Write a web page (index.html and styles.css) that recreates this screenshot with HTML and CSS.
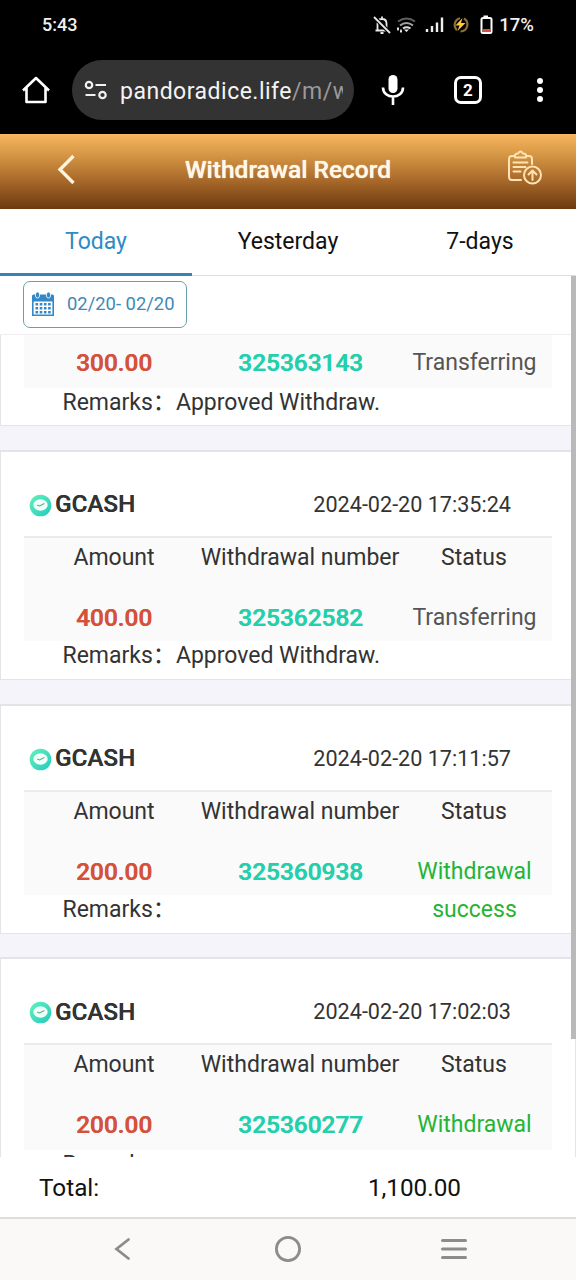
FILE: index.html
```html
<!DOCTYPE html>
<html lang="en">
<head>
<meta charset="utf-8">
<title>Withdrawal Record</title>
<link rel="stylesheet" href="styles.css">
</head>
<body>
<div class="status-bar">
  <span class="clock">5:43</span>
  <div class="indicators">
    <svg class="ind-icons" width="126" height="24" viewBox="0 0 126 24" fill="none">
      <path d="M4.500 17V10.500q0-4.500 4.500-4.500t4.500 4.500V17M2.500 17.500h13M7.500 20h3M9 5.500v-2" stroke="#e8e8e8" stroke-width="1.800"/>
      <path d="M1 4l16 16" stroke="#000" stroke-width="4"/>
      <path d="M1 4l16 16" stroke="#e8e8e8" stroke-width="1.800"/>
      <path d="M25 8.500q8.500-6 17 0" stroke="#5f5f5f" stroke-width="2"/>
      <path d="M27 12.500q6.500-5 13 0" stroke="#a5a5a5" stroke-width="2"/>
      <path d="M30 15.500q3.500-2.500 7.500 0" stroke="#ddd" stroke-width="2"/>
      <path d="M33.500 19l-2.500-2.500h5z" fill="#eee"/>
      <path d="M25 14.500v3M28 16.500v3M24 15.500h2M27 18.500h2" stroke="#eee" stroke-width="1.600"/>
      <path d="M54 19v-3M59 19v-6M64 19V9.500M69 19V4.500" stroke="#eee" stroke-width="2.400"/>
      <path d="M87 5.200a7 7 0 0 0-3 12M91 5.500a7 7 0 0 1-3.500 13" stroke="#8d7035" stroke-width="2.200"/>
      <path d="M89.500 5l-7 7.500h4L84.500 18l8-8h-4.500z" fill="#ffc83a"/>
      <path d="M110.500 2.500h4.500v2.500h-4.500z" fill="#fff"/>
      <rect x="108.500" y="5" width="10" height="15" rx="1.500" stroke="#fff" stroke-width="2"/>
      <path d="M109.500 16h8v3h-8z" fill="#d9503f"/>
    </svg>
    <span class="battery">17%</span>
  </div>
</div>

<div class="browser-bar">
  <svg class="home" width="28" height="28" viewBox="0 0 28 28" fill="none" stroke="#fff" stroke-width="2.600" stroke-linejoin="round"><path d="M1 14.500L14 2l13 12.500M4.500 12v14h19V12"/></svg>
  <div class="omnibox">
    <svg width="24" height="20" viewBox="0 0 24 20" fill="none" stroke="#f1f1f1" stroke-width="2.200"><circle cx="5" cy="5" r="3.200"/><path d="M11.500 5h10.500M1.500 15h10"/><circle cx="18.500" cy="15" r="3.200"/></svg>
    <span class="url">pandoradice.life<span class="path">/m/w</span></span>
  </div>
  <svg class="mic" width="24" height="32" viewBox="0 0 24 32" fill="none" stroke="#fff"><rect x="7.500" y="1" width="9" height="18" rx="4.500" fill="#fff" stroke="none"/><path d="M2 13.500c0 12 20 12 20 0M12 22.500V31" stroke-width="2.600"/></svg>
  <div class="tab-count">2</div>
  <div class="dots"><i></i><i></i><i></i></div>
</div>

<header class="page-head">
  <svg class="back" width="20" height="32" viewBox="0 0 20 32" fill="none" stroke="#fff3dc" stroke-width="3.400"><path d="M17.500 3L4 16.500 17.500 30"/></svg>
  <h1>Withdrawal Record</h1>
  <svg class="report" width="36" height="36" viewBox="0 0 36 36" fill="none" stroke="#ffe3b5" stroke-width="2" stroke-linecap="round" stroke-linejoin="round">
    <path d="M8 6H5Q2 6 2 9v18q0 3 3 3h9M19 6h3q3 0 3 3v5M8 7.500V5.500q0-2 3-2 2.500-4 5 0 3 0 3 2v2z"/>
    <path d="M6.500 12.500h14M6.500 17h12M6.500 21.500h7"/>
    <circle cx="25.500" cy="25" r="8.500"/><path d="M25.500 30v-9M21.500 24.500l4-4 4 4"/>
  </svg>
</header>

<nav class="tabs">
  <div class="tab active">Today</div>
  <div class="tab">Yesterday</div>
  <div class="tab">7-days</div>
</nav>

<main class="content">
  <div class="filter">
    <div class="range">
      <svg width="22" height="24" viewBox="0 0 22 24" fill="#3488c8">
        <path d="M0 4q0-1.500 1.500-1.500H20.500Q22 2.500 22 4V24H0zM1.600 9.500v12.900h18.800V9.500z" fill-rule="evenodd"/>
        <rect x="3.500" y="0" width="4" height="6" rx="2" stroke="#fff" stroke-width=".8"/><rect x="14.500" y="0" width="4" height="6" rx="2" stroke="#fff" stroke-width=".8"/>
        <path d="M3.500 12.200h15.500M3.500 16.200h15.500M3.500 20.200h15.500" stroke="#3488c8" stroke-width="2.400" stroke-dasharray="2.600 1.600"/>
      </svg>
      <span>02/20- 02/20</span>
    </div>
  </div>
  <div class="viewport">
    <div class="records">
      <section class="card partial">
        <div class="grid">
          <span class="amount">300.00</span><span class="number">325363143</span><span class="status">Transferring</span>
        </div>
        <p class="remarks">Remarks：<span>Approved Withdraw.</span></p>
      </section>
      <section class="card">
        <div class="card-head"><svg class="coin" viewBox="0 0 24 24"><use href="#coin"/></svg><b>GCASH</b><time>2024-02-20 17:35:24</time></div>
        <div class="grid">
          <span>Amount</span><span class="label-number">Withdrawal number</span><span>Status</span>
          <span class="amount">400.00</span><span class="number">325362582</span><span class="status">Transferring</span>
        </div>
        <p class="remarks">Remarks：<span>Approved Withdraw.</span></p>
      </section>
      <section class="card">
        <div class="card-head"><svg class="coin" viewBox="0 0 24 24"><use href="#coin"/></svg><b>GCASH</b><time>2024-02-20 17:11:57</time></div>
        <div class="grid">
          <span>Amount</span><span class="label-number">Withdrawal number</span><span>Status</span>
          <span class="amount">200.00</span><span class="number">325360938</span><span class="status success">Withdrawal success</span>
        </div>
        <p class="remarks">Remarks：</p>
      </section>
      <section class="card">
        <div class="card-head"><svg class="coin" viewBox="0 0 24 24"><use href="#coin"/></svg><b>GCASH</b><time>2024-02-20 17:02:03</time></div>
        <div class="grid last">
          <span>Amount</span><span class="label-number">Withdrawal number</span><span>Status</span>
          <span class="amount">200.00</span><span class="number">325360277</span><span class="status success">Withdrawal</span>
        </div>
        <p class="remarks">Remarks：</p>
      </section>
    </div>
  </div>
  <i class="scroll-thumb"></i>
</main>

<footer class="total"><span>Total:</span><span>1,100.00</span></footer>

<div class="system-nav">
  <svg width="18" height="24" viewBox="0 0 18 24" fill="none" stroke="#8c8c8a" stroke-width="2.800" stroke-linecap="round"><path d="M15.500 2.500L3.500 12l12 9.500"/></svg>
  <svg class="home-key" width="28" height="28" viewBox="0 0 28 28" fill="none" stroke="#8c8c8a" stroke-width="2.800"><circle cx="14" cy="14" r="11.600"/></svg>
  <svg width="28" height="22" viewBox="0 0 28 22" fill="none" stroke="#8c8c8a" stroke-width="3" stroke-linecap="round"><path d="M2.500 2.500h23M2.500 11h23M2.500 19.500h23"/></svg>
</div>

<svg width="0" height="0" class="defs">
  <defs>
    <linearGradient id="mint" x1="0" y1="0" x2="1" y2="1"><stop offset="0" stop-color="#63f3bd"/><stop offset="1" stop-color="#24c9bc"/></linearGradient>
    <symbol id="coin" viewBox="0 0 24 24"><circle cx="12" cy="12" r="11.300" fill="url(#mint)"/><ellipse cx="12" cy="11.500" rx="7.500" ry="6" fill="#effffa"/><path d="M8.500 11.500l2.500 1 5-2.500" fill="none" stroke="#5fa898" stroke-width="1.200"/></symbol>
  </defs>
</svg>
</body>
</html>
```
FILE: styles.css
```css
* { box-sizing: border-box; }
body {
  margin: 0;
  width: 576px;
  height: 1280px;
  overflow: hidden;
  display: flex;
  flex-direction: column;
  background: #fff;
  color: #333;
  font-family: Roboto, "Noto Sans CJK SC", sans-serif;
  font-size: 23px;
}
svg { display: block; flex: none; }
.defs { position: absolute; }

.status-bar {
  height: 48px;
  flex: none;
  background: #000;
  color: #f0f0f0;
  display: flex;
  align-items: center;
  justify-content: space-between;
  padding: 1px 42px 0;
  font-size: 18.500px;
  font-weight: 500;
}
.clock { font-size: 18px; }
.indicators { display: flex; align-items: center; }

.browser-bar {
  height: 86px;
  flex: none;
  background: #000;
  display: flex;
  align-items: center;
  padding: 0 33px 2px 22px;
}
.omnibox {
  width: 282px;
  height: 60px;
  margin-left: 22px;
  padding: 0 10px 0 12px;
  border-radius: 30px;
  background: #333;
  color: #f4f4f4;
  display: flex;
  align-items: center;
  gap: 12px;
  overflow: hidden;
}
.url {
  width: 223px;
  overflow: hidden;
  white-space: nowrap;
  font-size: 23px;
  letter-spacing: .5px;
  padding-top: 2px;
}
.path { color: #9a9a9a; }
.mic { margin-left: 27px; }
.tab-count {
  width: 28px;
  height: 28px;
  margin-left: 49px;
  border: 3px solid #fff;
  border-radius: 7px;
  color: #fff;
  font-size: 17px;
  line-height: 22px;
  font-weight: 700;
  text-align: center;
}
.dots { display: flex; flex-direction: column; gap: 3px; margin-left: auto; }
.dots i { width: 6px; height: 6px; border-radius: 50%; background: #fff; }

.page-head {
  height: 75px;
  flex: none;
  display: grid;
  grid-template-columns: 100px 1fr 100px;
  align-items: center;
  background: linear-gradient(#f7b55e, #d99a47 25%, #a8692a 62%, #6c390f);
}
.back { margin: -6px 0 0 56px; }
.page-head h1 {
  margin: 0;
  padding-bottom: 4px;
  color: #fff8e8;
  text-align: center;
  font-size: 24.500px;
  font-weight: 500;
  text-shadow: 0 0 1px #fff8e8;
}
.report { margin: -8px 0 0 31px; }

.tabs {
  height: 67px;
  flex: none;
  display: grid;
  grid-template-columns: repeat(3, 1fr);
  border-bottom: 1px solid #ddd;
  color: #111;
}
.tab { height: 67px; text-align: center; line-height: 66px; }
.active { color: #2e8bc4; border-bottom: 3px solid #3883b8; }

.content {
  position: relative;
  height: 881px;
  flex: none;
  display: flex;
  flex-direction: column;
}
.filter { height: 59px; flex: none; padding: 5px 23px; border-bottom: 1px solid #eee; }
.range {
  width: 164px;
  height: 47px;
  border: 1px solid #6a9fae;
  border-radius: 7px;
  display: flex;
  align-items: center;
  gap: 13px;
  padding: 0 0 2px 8px;
  color: #4189b5;
  font-size: 18.400px;
  white-space: nowrap;
}
.viewport { flex: 1; min-height: 0; overflow: hidden; background: #f4f4fa; }
.records { display: flex; flex-direction: column; gap: 23.800px; }
.card {
  height: 230px;
  flex: none;
  background: #fff;
  border: 1px solid #e4e4e8;
  border-top-width: 2px;
  padding: 0 23px;
}
.card-head { height: 84px; display: flex; align-items: center; padding: 21px 41px 0 5px; }
.coin { width: 23px; height: 23px; margin: 2px 3px 0 0; }
.card-head b { font-size: 24.200px; font-weight: 500; text-shadow: .3px 0 0 currentColor; }
.card-head time { margin-left: auto; font-size: 21.600px; }
.grid {
  height: 105px;
  padding-top: 1px;
  border-top: 2px solid #ebebeb;
  background: #fafafa;
  display: grid;
  grid-template-columns: 180px 192px 156px;
  grid-template-rows: 60px 42px;
  line-height: 38.500px;
  text-align: center;
  white-space: nowrap;
}
.label-number { padding-right: 6px; justify-self: center; }
.grid > .label-number { margin-left: -3px; margin-right: -3px; padding-right: 0; }
.amount, .number {
  font-weight: 500;
  font-size: 24.400px;
  line-height: 37px;
  text-shadow: .5px 0 0 currentColor;
}
.amount { color: #d4513a; }
.number { color: #24cfab; padding-left: 1px; }
.status { color: #555; padding-left: 1px; }
.success { color: #24b436; padding: 0 14px 0 15px; white-space: normal; }
.remarks { margin: 0; padding-left: 38.500px; line-height: 30px; white-space: nowrap; }

/* Record scrolled part-way under the filter bar */
.partial { height: 91px; border-top: 0; }
.partial .grid { height: 53px; padding-top: 9px; border-top: 0; grid-template-rows: 42px; }
.grid.last { height: 107px; }

.scroll-thumb { position: absolute; right: 0; top: 0; width: 5px; height: 763px; background: #b9b9b9; }

.total {
  height: 60px;
  flex: none;
  display: flex;
  align-items: center;
  justify-content: space-between;
  padding: 1px 115px 0 39px;
  font-size: 24.300px;
  color: #111;
}
.system-nav {
  height: 63px;
  flex: none;
  display: flex;
  align-items: center;
  justify-content: space-between;
  padding: 0 108px 2px 113px;
  border-top: 2px solid #ddd;
  background: #faf9f7;
}
.home-key { margin-left: 5px; }
```
